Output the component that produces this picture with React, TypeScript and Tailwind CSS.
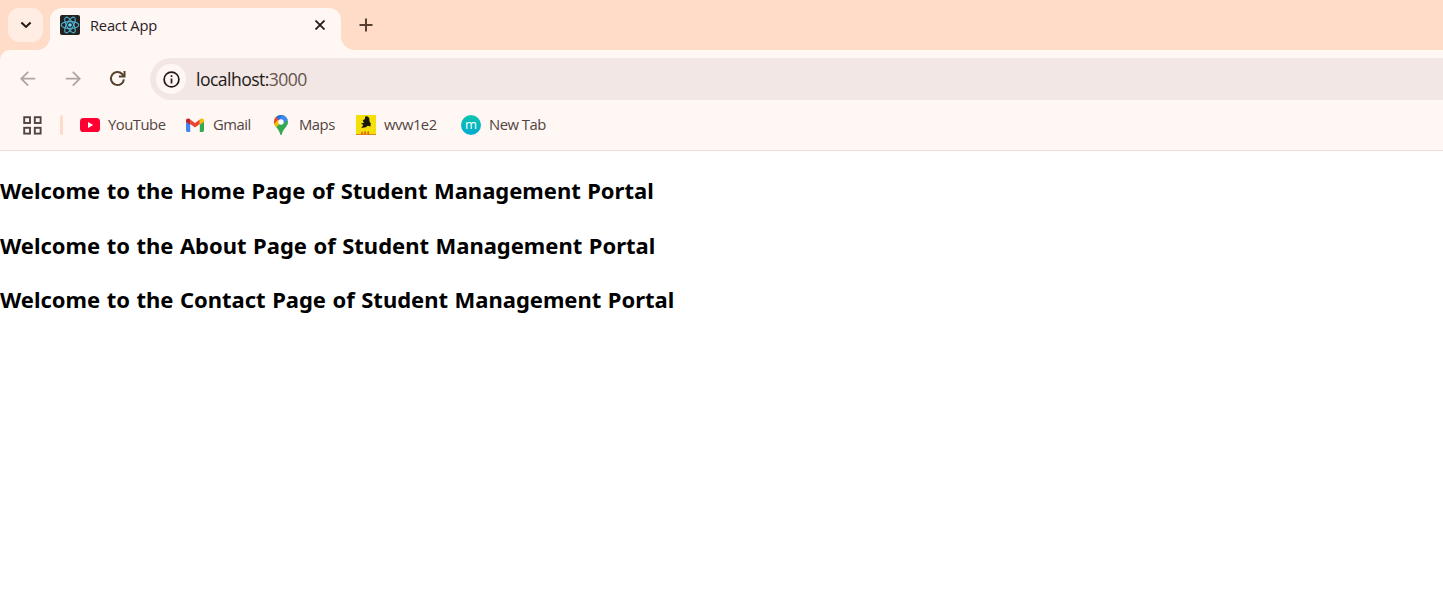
import type { ReactNode } from "react";

function ReactLogo() {
  return (
    <svg width="20" height="20" viewBox="0 0 20 20" fill="none">
      <rect width="20" height="20" rx="2" fill="#222" />
      <g stroke="#4fb3cf" strokeWidth="1.1">
        <ellipse cx="10" cy="10" rx="8.8" ry="3.4" />
        <ellipse cx="10" cy="10" rx="8.8" ry="3.4" transform="rotate(60 10 10)" />
        <ellipse cx="10" cy="10" rx="8.8" ry="3.4" transform="rotate(120 10 10)" />
      </g>
      <circle cx="10" cy="10" r="1.8" fill="#61dafb" />
    </svg>
  );
}

function TabStrip() {
  return (
    <header className="flex h-[50px] bg-[#ffdcc8]">
      <button className="ml-2 mt-2 flex h-[34px] w-[35px] items-center justify-center rounded-[11px] bg-[#ffece2]">
        <svg width="12" height="8" viewBox="0 0 12 8" fill="none" stroke="#231a17" strokeWidth="2.1">
          <path d="M1.4 1.4 6 5.9l4.6-4.5" />
        </svg>
      </button>
      <svg className="-ml-[6px] mt-[37px] shrink-0" width="13" height="13" viewBox="0 0 13 13" fill="#fff7f4">
        <path d="M13 0v13H0A13 13 0 0 0 13 0Z" />
      </svg>
      <div className="mt-2 flex h-[42px] w-[290.5px] shrink-0 items-start rounded-t-[12px] bg-[#fff7f4] pl-[10px] pt-[7px]">
        <ReactLogo />
        <span className="ml-[10px] w-[225px] shrink-0 text-[14.7px] font-[370] leading-[21px] tracking-[-0.2px] text-[#2b211e]">React App</span>
        <svg className="mt-[5px] shrink-0" width="10" height="10" viewBox="0 0 10 10" stroke="#231a17" strokeWidth="1.8">
          <path d="m.5.5 9 9m0-9-9 9" />
        </svg>
      </div>
      <svg className="mt-[36px] shrink-0" width="14" height="14" viewBox="0 0 14 14" fill="#fff7f4">
        <path d="M0 0v14h14A14 14 0 0 1 0 0Z" />
      </svg>
      <svg className="ml-[4.5px] mt-[18px]" width="14" height="14" viewBox="0 0 14 14" stroke="#57402f" strokeWidth="2">
        <path d="M.5 7h13M7 .5v13" />
      </svg>
    </header>
  );
}

function Toolbar() {
  return (
    <div className="flex h-[58px] items-start pt-2">
      <svg className="ml-5 mt-[13px] shrink-0" width="16" height="16" viewBox="0 0 16 16" fill="none" stroke="#b0a5a1" strokeWidth="1.8">
        <path d="M15.2 7.7H1.5M8.2.8 1.3 7.7l6.9 6.9" />
      </svg>
      <svg className="ml-[28.5px] mt-[13px] shrink-0" width="16" height="16" viewBox="0 0 16 16" fill="none" stroke="#b0a5a1" strokeWidth="1.8">
        <path d="M.8 7.7h13.7M7.8.8l6.9 6.9-6.9 6.9" />
      </svg>
      <svg className="ml-[28.5px] mt-[12px] shrink-0" width="17" height="17" viewBox="0 0 17 17" fill="none" stroke="#57402f" strokeWidth="2">
        <path d="M14.9 9.3A6.5 6.5 0 1 1 13.1 4l1.8 1.9" />
        <path d="M15.5 1v5.6H9.9" />
      </svg>
      <div className="ml-[24px] flex h-[42px] flex-1 items-center rounded-l-full bg-[#f2e7e4] pl-[6px]">
        <span className="flex size-[30px] items-center justify-center rounded-full bg-[#fff7f4]">
          <svg width="17" height="17" viewBox="0 0 17 17" fill="none" stroke="#231a17" strokeWidth="1.7">
            <circle cx="8.5" cy="8.5" r="7.4" />
            <path d="M8.5 7.4v5.2M8.5 4.3v1.8" />
          </svg>
        </span>
        <span className="ml-[10px] pb-[1px] text-[17.6px] font-[370] leading-6 tracking-[-0.55px] text-[#231a17]">
          localhost:<span className="text-[#66554e]">3000</span>
        </span>
      </div>
    </div>
  );
}

function Bookmark({ icon, label, width }: { icon: ReactNode; label: string; width: string }) {
  return (
    <a className={`flex h-5 shrink-0 items-center gap-2 ${width}`}>
      {icon}
      <span className="whitespace-nowrap pb-[2px] text-[14.8px] font-[370] leading-5 tracking-[-0.48px] text-[#51443f]">{label}</span>
    </a>
  );
}

function BookmarksBar() {
  return (
    <nav className="flex h-[43px] items-start border-b border-[#efdfd7] pt-[7px]">
      <svg className="ml-[23px] mt-[1px] shrink-0" width="19" height="19" viewBox="0 0 19 19" fill="none" stroke="#51443f" strokeWidth="1.9">
        <rect x="1.2" y="1.2" width="5.8" height="5.8" />
        <rect x="11.8" y="1.2" width="5.8" height="5.8" />
        <rect x="1.2" y="11.8" width="5.8" height="5.8" />
        <rect x="11.8" y="11.8" width="5.8" height="5.8" />
      </svg>
      <span className="ml-[18px] mr-[17px] h-5 w-[3px] shrink-0 rounded-full bg-[#ffdcc8]" />
      <Bookmark
        width="w-[105px]"
        label="YouTube"
        icon={
          <svg width="20" height="14" viewBox="0 0 20 14">
            <rect width="20" height="14" rx="3.6" fill="#ff0033" />
            <path d="m8 4 5.2 3L8 10Z" fill="#fff" />
          </svg>
        }
      />
      <Bookmark
        width="w-[86px]"
        label="Gmail"
        icon={
          <svg width="20" height="14" viewBox="0 0 20 14">
            <path d="M1 3v9.6c0 .8.6 1.4 1.4 1.4h2.8V6L1 3Z" fill="#4285f4" />
            <path d="M14.8 14h2.8c.8 0 1.4-.6 1.4-1.4V3l-4.2 3v8Z" fill="#34a853" />
            <path d="M5.2 6V1.4L10 5l4.8-3.6V6L10 9.6 5.2 6Z" fill="#ea4335" />
            <path d="M1 2.4v1.3l4.2 3.1V1.4L4.4.8C3-.2 1 .7 1 2.4Z" fill="#c5221f" />
            <path d="M14.8 1.4v5.4L19 3.7V2.4C19 .7 17-.2 15.6.8l-.8.6Z" fill="#fbbc04" />
          </svg>
        }
      />
      <Bookmark
        width="w-[85px]"
        label="Maps"
        icon={
          <svg width="20" height="20" viewBox="0 0 20 20">
            <clipPath id="pin">
              <path d="M10 0a7 7 0 0 0-7 7c0 2.2.9 3.6 2.4 5.4C7.3 14.7 8.4 16.1 9 18.8c.2.8.5 1.2 1 1.2s.8-.4 1-1.2c.6-2.7 1.7-4.1 3.6-6.4C16.1 10.6 17 9.2 17 7a7 7 0 0 0-7-7Z" />
            </clipPath>
            <g clipPath="url(#pin)">
              <path d="M0 0h20v20H0Z" fill="#34a853" />
              <path d="M3.8 14.3 17.4-2H0v14Z" fill="#fbbc04" />
              <path d="M4.2 2.2 8 5.4l3-3.2L14.4-1H3Z" fill="#1a73e8" />
              <path d="m11.8 5.2 3.4-4L12-1 7.8 5.1Z" fill="#4285f4" />
              <path d="m15 1-5.1 6 3.4 1L18 3.2Z" fill="#4285f4" />
              <path d="m2 10.5 5.7-6.8-3.6-2.5L1 5Z" fill="#ea4335" />
            </g>
            <circle cx="10" cy="7" r="2.7" fill="#fff" />
          </svg>
        }
      />
      <Bookmark
        width="w-[105px]"
        label="wvw1e2"
        icon={
          <svg width="20" height="20" viewBox="0 0 20 20">
            <path d="M0 0h20v20H0Z" fill="#f5df08" />
            <path d="m9.2 1.6 1.7-.3 1.4.8 1 1.1.2 3.2 1.3 2.2-.4 3-2.6-.8-2.1 1.4-4.4.7 2-2.9-2.3-1.5 3-.8-1.3-2.3 2.2-1.4Z" fill="#17170a" />
            <path d="M0 19h20v1H0Z" fill="#dc8a18" />
            <path d="M5.2 19.5v-2.2l.8-.8.8.8v2.2Zm3-.1v-2.7l.8-.8.8.8v2.7Zm3.2 0v-2.5l.8-.8.8.8v2.5Z" fill="#e4570f" />
          </svg>
        }
      />
      <Bookmark
        width="w-[90px]"
        label="New Tab"
        icon={
          <span className="flex size-5 items-center justify-center rounded-full bg-linear-to-b from-[#12c5ad] to-[#05a9cf] pb-[2px] text-[13px] leading-none text-white">
            m
          </span>
        }
      />
    </nav>
  );
}

export default function App() {
  return (
    <div className="h-[610px] w-full overflow-hidden bg-white font-['Open_Sans','Noto_Sans',sans-serif]">
      <TabStrip />
      <div className="bg-[#ffdcc8]">
        <div className="rounded-tl-[10px] bg-[#fff7f4]">
          <Toolbar />
          <BookmarksBar />
        </div>
      </div>
      <main className="flex flex-col gap-[22.5px] whitespace-nowrap pt-[23px] font-['Noto_Sans',sans-serif] text-[22px] font-bold leading-8 tracking-[-0.01px] [word-spacing:0.8px] text-black">
        <h2>Welcome to the Home Page of Student Management Portal</h2>
        <h2>Welcome to the About Page of Student Management Portal</h2>
        <h2>Welcome to the Contact Page of Student Management Portal</h2>
      </main>
    </div>
  );
}
